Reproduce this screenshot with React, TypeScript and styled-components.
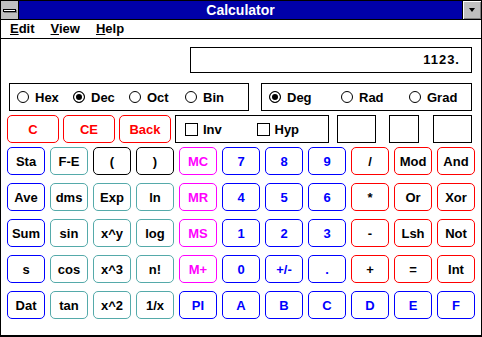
import styled, { createGlobalStyle } from 'styled-components';

const GlobalStyle = createGlobalStyle`
  html, body {
    margin: 0;
    padding: 0;
    background: #fff;
  }
  body {
    font-family: "Liberation Sans", Arial, sans-serif;
  }
`;

const BLUE = '#0000ff';
const RED = '#ff0000';
const MAGENTA = '#ff00ff';
const TEAL = '#55aaaa';
const BLACK = '#000000';

const Window = styled.div`
  width: 482px;
  height: 337px;
  box-sizing: border-box;
  border: 1px solid #000;
  border-bottom-width: 2px;
  display: flex;
  flex-direction: column;
  background: #fff;
  font-family: "Liberation Sans", Arial, sans-serif;
  font-weight: bold;
  font-size: 13px;
  color: #000;
  overflow: hidden;
`;

const TitleBar = styled.div`
  height: 18px;
  display: flex;
  background: #0000a8;
  border-bottom: 1px solid #000;
`;

const SysMenu = styled.div`
  width: 17px;
  border-right: 1px solid #000;
  background: #c0c0c0;
  display: flex;
  align-items: center;
  justify-content: center;
`;

const SysBar = styled.span`
  width: 11px;
  height: 1px;
  border: 1px solid #000;
  background: #fff;
  box-shadow: 1px 1px 0 #808080;
`;

const Title = styled.div`
  flex: 1;
  color: #fff;
  font-size: 14px;
  line-height: 18px;
  text-align: center;
`;

const MinButton = styled.div`
  width: 18px;
  border-left: 1px solid #000;
  background: #c0c0c0;
  box-shadow: inset 1px 1px 0 #fff, inset -1px -1px 0 #808080;
  display: flex;
  align-items: center;
  justify-content: center;
`;

const Arrow = styled.span`
  width: 0;
  height: 0;
  border-left: 3px solid transparent;
  border-right: 3px solid transparent;
  border-top: 4px solid #000;
`;

const MenuBar = styled.div`
  height: 18px;
  display: flex;
  align-items: center;
  gap: 16px;
  padding-left: 9px;
  border-bottom: 1px solid #000;
  font-size: 13px;
`;

const MenuItem = styled.span`
  line-height: 18px;

  u {
    text-decoration: underline;
    text-underline-offset: 1px;
  }
`;

const Content = styled.div`
  display: flex;
  flex-direction: column;
  padding: 8px 6px 0 6px;
`;

const DisplayRow = styled.div`
  display: flex;
  justify-content: flex-end;
  padding-right: 3px;
`;

const Display = styled.div`
  box-sizing: border-box;
  width: 282px;
  height: 26px;
  border: 1px solid #000;
  text-align: right;
  padding-right: 11px;
  line-height: 24px;
  letter-spacing: 1px;
`;

const RadioRow = styled.div`
  display: flex;
  margin-top: 10px;
  padding-left: 2px;
  gap: 12px;
`;

const Group = styled.div<{ $width: number }>`
  box-sizing: border-box;
  width: ${(p) => p.$width}px;
  height: 28px;
  border: 1px solid #000;
  display: flex;
  align-items: center;
  padding-left: 7px;
`;

const Option = styled.label<{ $width: number }>`
  width: ${(p) => p.$width}px;
  display: flex;
  align-items: center;
  gap: 6px;
`;

const Radio = styled.span<{ $on?: boolean }>`
  box-sizing: border-box;
  width: 12px;
  height: 12px;
  border: 1px solid #000;
  border-radius: 50%;
  background: ${(p) => (p.$on ? '#000' : '#fff')};
  box-shadow: inset 0 0 0 2px #fff;
`;

const ControlRow = styled.div`
  display: flex;
  margin-top: 4px;
  height: 28px;
`;

const Key = styled.button<{ $border: string; $color: string; $width?: number }>`
  box-sizing: border-box;
  width: ${(p) => (p.$width ? `${p.$width}px` : '100%')};
  height: 28px;
  margin: 0;
  padding: 0;
  border: 1px solid ${(p) => p.$border};
  border-radius: 5px;
  background: #fff;
  color: ${(p) => p.$color};
  font-family: "Liberation Sans", Arial, sans-serif;
  font-weight: bold;
  font-size: 13px;
  line-height: 1;
`;

const EditKeys = styled.div`
  display: flex;
  gap: 4px;
`;

const CheckBox = styled.div<{ $width: number; $gap: number }>`
  box-sizing: border-box;
  width: ${(p) => p.$width}px;
  height: 28px;
  margin-left: ${(p) => p.$gap}px;
  border: 1px solid #000;
  display: flex;
  align-items: center;
  padding-left: 9px;
`;

const Check = styled.label`
  width: 77px;
  display: flex;
  align-items: center;
  gap: 5px;
`;

const Tick = styled.span`
  box-sizing: border-box;
  width: 13px;
  height: 13px;
  border: 1px solid #000;
`;

const KeyGrid = styled.div`
  display: grid;
  grid-template-columns: repeat(11, 38px);
  grid-auto-rows: 28px;
  column-gap: 5px;
  row-gap: 8px;
  margin-top: 4px;
`;

type KeyDef = [string, string, string];

const keys: KeyDef[][] = [
  [['Sta', BLUE, BLACK], ['F-E', TEAL, BLACK], ['(', BLACK, BLACK], [')', BLACK, BLACK], ['MC', MAGENTA, MAGENTA], ['7', BLUE, BLUE], ['8', BLUE, BLUE], ['9', BLUE, BLUE], ['/', RED, BLACK], ['Mod', RED, BLACK], ['And', RED, BLACK]],
  [['Ave', BLUE, BLACK], ['dms', TEAL, BLACK], ['Exp', TEAL, BLACK], ['ln', TEAL, BLACK], ['MR', MAGENTA, MAGENTA], ['4', BLUE, BLUE], ['5', BLUE, BLUE], ['6', BLUE, BLUE], ['*', RED, BLACK], ['Or', RED, BLACK], ['Xor', RED, BLACK]],
  [['Sum', BLUE, BLACK], ['sin', TEAL, BLACK], ['x^y', TEAL, BLACK], ['log', TEAL, BLACK], ['MS', MAGENTA, MAGENTA], ['1', BLUE, BLUE], ['2', BLUE, BLUE], ['3', BLUE, BLUE], ['-', RED, BLACK], ['Lsh', RED, BLACK], ['Not', RED, BLACK]],
  [['s', BLUE, BLACK], ['cos', TEAL, BLACK], ['x^3', TEAL, BLACK], ['n!', TEAL, BLACK], ['M+', MAGENTA, MAGENTA], ['0', BLUE, BLUE], ['+/-', BLUE, BLUE], ['.', BLUE, BLUE], ['+', RED, BLACK], ['=', RED, BLACK], ['Int', RED, BLACK]],
  [['Dat', BLUE, BLACK], ['tan', TEAL, BLACK], ['x^2', TEAL, BLACK], ['1/x', TEAL, BLACK], ['PI', BLUE, BLUE], ['A', BLUE, BLUE], ['B', BLUE, BLUE], ['C', BLUE, BLUE], ['D', BLUE, BLUE], ['E', BLUE, BLUE], ['F', BLUE, BLUE]],
];

const App = () => (
  <>
    <GlobalStyle />
    <Window>
      <TitleBar>
        <SysMenu>
          <SysBar />
        </SysMenu>
        <Title>Calculator</Title>
        <MinButton>
          <Arrow />
        </MinButton>
      </TitleBar>
      <MenuBar>
        <MenuItem><u>E</u>dit</MenuItem>
        <MenuItem><u>V</u>iew</MenuItem>
        <MenuItem><u>H</u>elp</MenuItem>
      </MenuBar>
      <Content>
        <DisplayRow>
          <Display>1123.</Display>
        </DisplayRow>
        <RadioRow>
          <Group $width={240}>
            <Option $width={56}><Radio />Hex</Option>
            <Option $width={56}><Radio $on />Dec</Option>
            <Option $width={56}><Radio />Oct</Option>
            <Option $width={56}><Radio />Bin</Option>
          </Group>
          <Group $width={211}>
            <Option $width={72}><Radio $on />Deg</Option>
            <Option $width={68}><Radio />Rad</Option>
            <Option $width={60}><Radio />Grad</Option>
          </Group>
        </RadioRow>
        <ControlRow>
          <EditKeys>
            <Key $border={RED} $color={RED} $width={52}>C</Key>
            <Key $border={RED} $color={RED} $width={52}>CE</Key>
            <Key $border={RED} $color={RED} $width={52}>Back</Key>
          </EditKeys>
          <CheckBox $width={154} $gap={4}>
            <Check><Tick />Inv</Check>
            <Check><Tick />Hyp</Check>
          </CheckBox>
          <CheckBox $width={39} $gap={8} />
          <CheckBox $width={30} $gap={13} />
          <CheckBox $width={39} $gap={14} />
        </ControlRow>
        <KeyGrid>
          {keys.flat().map(([label, border, color], i) => (
            <Key key={i} $border={border} $color={color}>
              {label}
            </Key>
          ))}
        </KeyGrid>
      </Content>
    </Window>
  </>
);

export default App;
